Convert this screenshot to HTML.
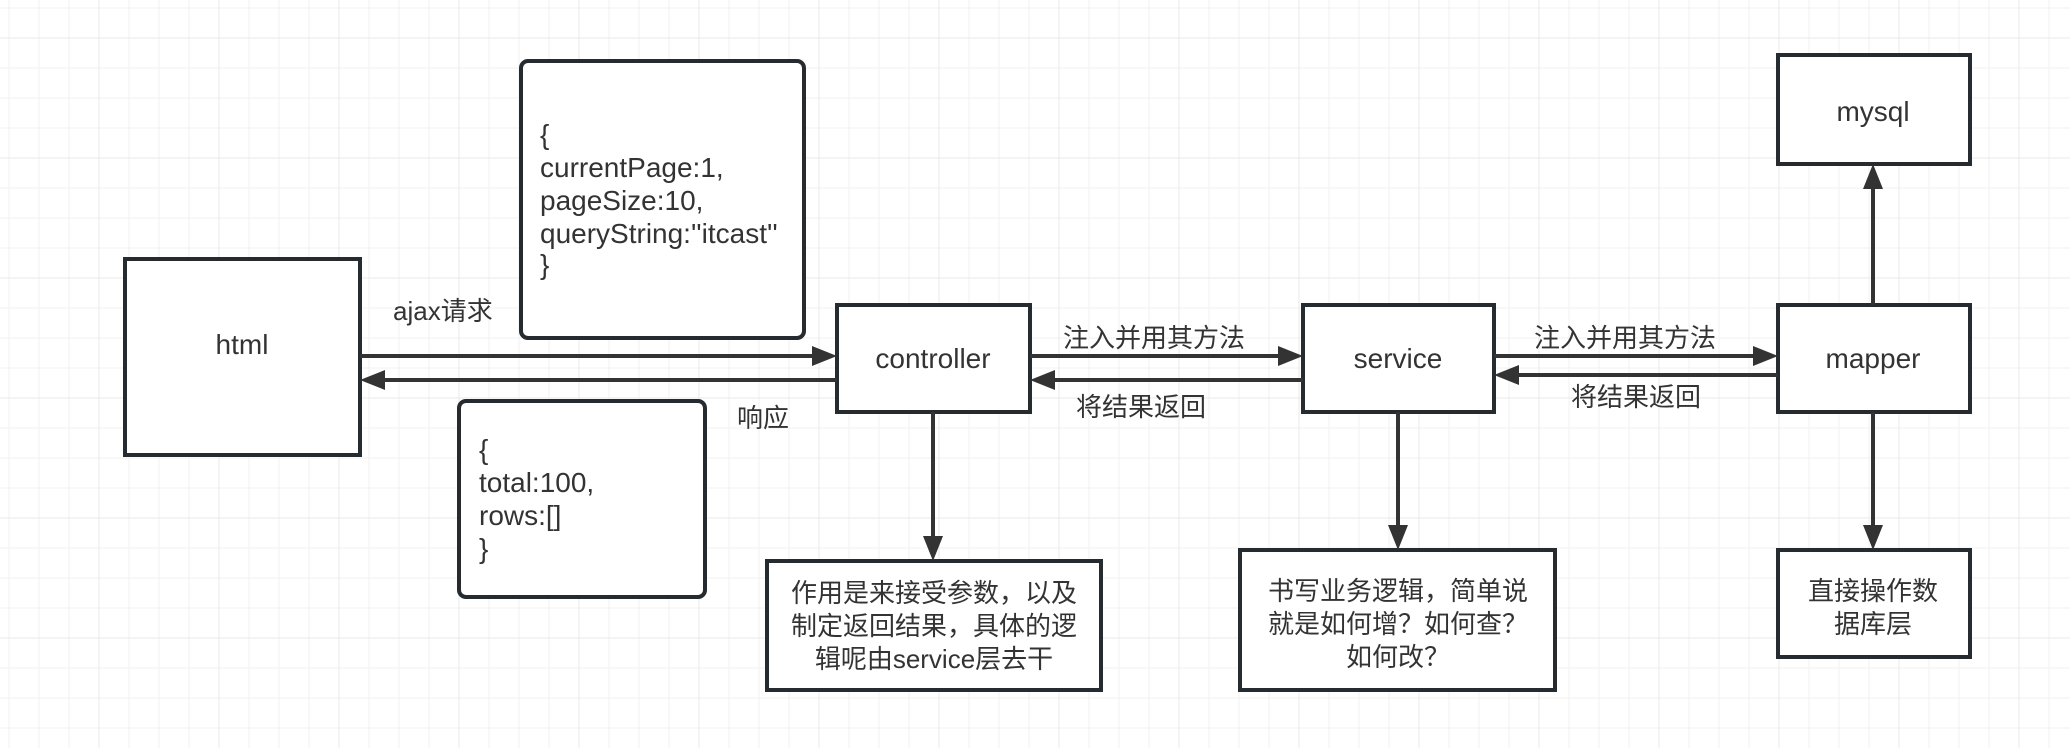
<!DOCTYPE html>
<html><head><meta charset="utf-8"><style>
html,body{margin:0;padding:0;background:#fff;}
svg{display:block;font-family:"Liberation Sans","Noto Sans CJK SC",sans-serif;}
</style></head><body>
<svg width="2070" height="748" viewBox="0 0 2070 748" xmlns="http://www.w3.org/2000/svg">
<defs>
<pattern id="minor" width="30" height="30" patternUnits="userSpaceOnUse" x="8.5" y="7.5">
<path d="M0 0V30M0 0H30" stroke="#f2f2f2" stroke-width="2" fill="none"/>
</pattern>
<pattern id="major" width="120" height="120" patternUnits="userSpaceOnUse" x="98.5" y="37.5">
<path d="M0 0V120M0 0H120" stroke="#e9e9e9" stroke-width="2" fill="none"/>
</pattern>
</defs>
<rect width="2070" height="748" fill="#fff"/>
<rect width="2070" height="748" fill="url(#minor)"/>
<rect width="2070" height="748" fill="url(#major)"/>

<g stroke="#262b30" stroke-width="4" fill="#fff">
<rect x="125" y="259" width="235" height="196"/>
<rect x="521" y="61" width="283" height="277" rx="7"/>
<rect x="459" y="401" width="246" height="196" rx="7"/>
<rect x="837" y="305" width="193" height="107"/>
<rect x="1303" y="305" width="191" height="107"/>
<rect x="1778" y="305" width="192" height="107"/>
<rect x="1778" y="55" width="192" height="109"/>
<rect x="767" y="561" width="334" height="129"/>
<rect x="1240" y="550" width="315" height="140"/>
<rect x="1778" y="550" width="192" height="107"/>
</g>

<g stroke="#333" stroke-width="4" fill="#333">
<line x1="360" y1="356" x2="814" y2="356"/><path d="M837 356L812 346L812 366z" stroke="none"/>
<line x1="837" y1="380" x2="383" y2="380"/><path d="M360 380L385 370L385 390z" stroke="none"/>
<line x1="1030" y1="356" x2="1280" y2="356"/><path d="M1303 356L1278 346L1278 366z" stroke="none"/>
<line x1="1303" y1="380" x2="1053" y2="380"/><path d="M1030 380L1055 370L1055 390z" stroke="none"/>
<line x1="1494" y1="356" x2="1755" y2="356"/><path d="M1778 356L1753 346L1753 366z" stroke="none"/>
<line x1="1778" y1="375" x2="1517" y2="375"/><path d="M1494 375L1519 365L1519 385z" stroke="none"/>
<line x1="933" y1="412" x2="933" y2="538"/><path d="M933 561L923 536L943 536z" stroke="none"/>
<line x1="1398" y1="412" x2="1398" y2="527"/><path d="M1398 550L1388 525L1408 525z" stroke="none"/>
<line x1="1873" y1="412" x2="1873" y2="527"/><path d="M1873 550L1863 525L1883 525z" stroke="none"/>
<line x1="1873" y1="305" x2="1873" y2="187"/><path d="M1873 164L1863 189L1883 189z" stroke="none"/>
</g>

<g fill="#333" font-size="28">
<text x="242" y="354" text-anchor="middle">html</text>
<text x="933" y="368" text-anchor="middle">controller</text>
<text x="1398" y="368" text-anchor="middle">service</text>
<text x="1873" y="368" text-anchor="middle">mapper</text>
<text x="1873" y="121" text-anchor="middle">mysql</text>
<text x="540" y="144">{</text>
<text x="540" y="177">currentPage:1,</text>
<text x="540" y="210">pageSize:10,</text>
<text x="540" y="243">queryString:''itcast''</text>
<text x="540" y="274">}</text>
<text x="479" y="459">{</text>
<text x="479" y="492">total:100,</text>
<text x="479" y="525">rows:[]</text>
<text x="479" y="558">}</text>
</g>
<g fill="#333" font-size="26">
<text x="393" y="320">ajax请求</text>
<text x="737" y="427">响应</text>
<text x="1063" y="347">注入并用其方法</text>
<text x="1076" y="416">将结果返回</text>
<text x="1534" y="347">注入并用其方法</text>
<text x="1571" y="406">将结果返回</text>
<text x="934" y="602" text-anchor="middle">作用是来接受参数，以及</text>
<text x="934" y="635" text-anchor="middle">制定返回结果，具体的逻</text>
<text x="934" y="668" text-anchor="middle">辑呢由service层去干</text>
<text x="1398" y="600" text-anchor="middle">书写业务逻辑，简单说</text>
<text x="1398" y="633" text-anchor="middle">就是如何增？如何查？</text>
<text x="1398" y="666" text-anchor="middle">如何改？</text>
<text x="1873" y="600" text-anchor="middle">直接操作数</text>
<text x="1873" y="633" text-anchor="middle">据库层</text>
</g>
</svg>
</body></html>
